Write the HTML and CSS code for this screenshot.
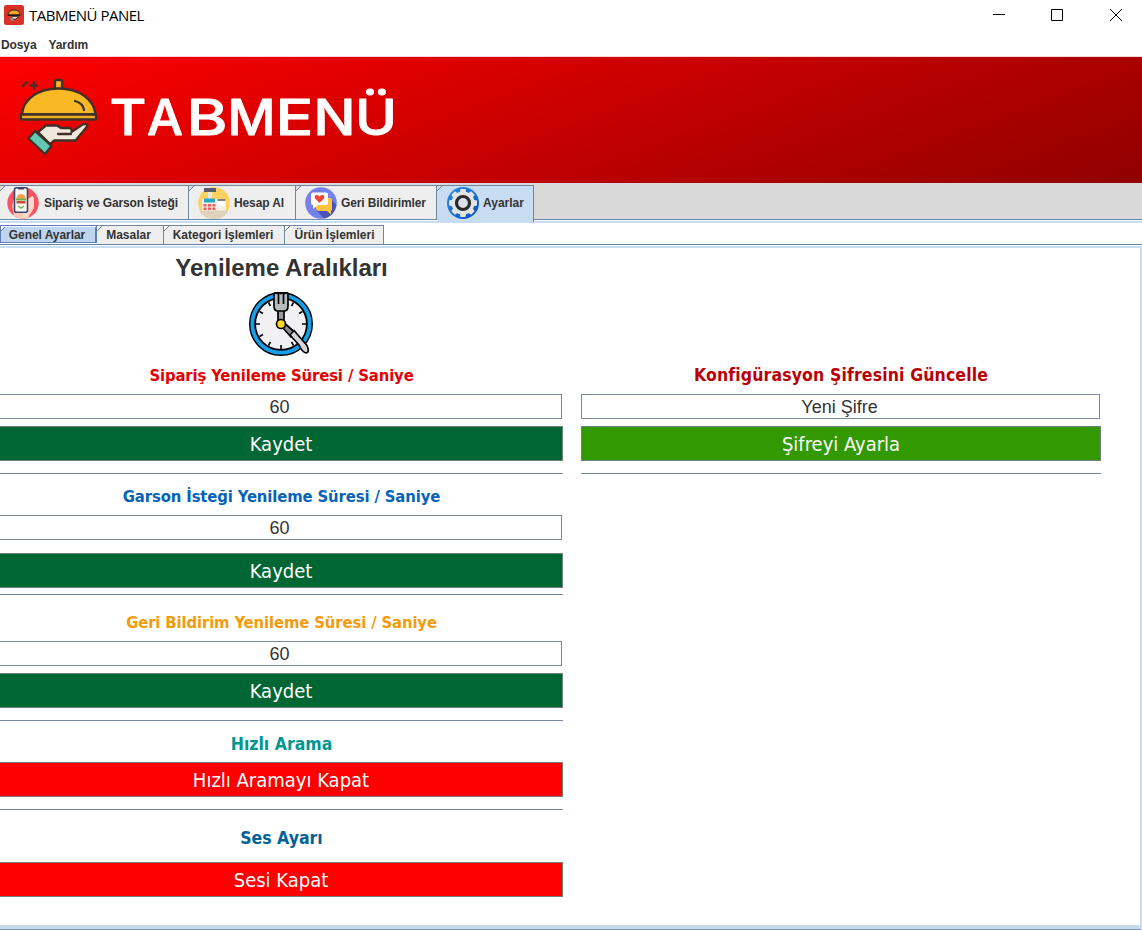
FILE: index.html
```html
<!DOCTYPE html>
<html lang="tr">
<head>
<meta charset="utf-8">
<title>TABMENÜ PANEL</title>
<link rel="stylesheet" href="styles.css">
</head>
<body>
<header class="titlebar">
  <svg class="app-icon" viewBox="0 0 20 20"><rect width="20" height="20" rx="2.500" fill="#d93125"/><path d="M4 9.500C5 6 7 5 10 5s5.500 1 6 4.500v1H4z" fill="#f0a72a" stroke="#2d2118"/><path d="M4 10h12" stroke="#241c18" stroke-width="1.500"/><path d="M7 13l2-1.500h3l3-.5-3 3H9z" fill="#f4e9d8" stroke="#30241e" stroke-width=".8"/><path d="M7 12.500l3 2.500-1 1-3-2z" fill="#67b8a5"/></svg>
  <h1 class="window-title">TABMENÜ PANEL</h1>
  <div class="window-buttons">
    <svg viewBox="0 0 12 12"><path d="M0 5.500h12"/></svg>
    <svg viewBox="0 0 12 12"><path d="M.5.500h11v11H.5z"/></svg>
    <svg viewBox="0 0 12 12"><path d="M0 0l12 12M12 0L0 12"/></svg>
  </div>
</header>
<nav class="menubar"><span class="menu-file">Dosya</span><span class="menu-help">Yardım</span></nav>

<section class="banner">
  <svg class="banner-logo" viewBox="0 0 110 110">
    <g fill="none" stroke="#403028" stroke-width="2.300" stroke-linejoin="round" stroke-linecap="round">
      <path d="M23 21q1-2.500 3.500-3.500M31 20.500h6M34 17.500v6"/>
      <path fill="#f9b924" d="M55 24v-7.500q0-1.500 1.500-1.500h4q1.500 0 1.500 1.500V24z"/>
      <path fill="#f9b924" d="M22 49.500C23 34 38 23.500 58.500 23.500S94 34 95.500 49.500z"/>
      <path fill="#f0ac25" d="M21 49.500h75v5H21z"/>
      <path d="M75 36q8 2 9 9"/>
      <path fill="#f0e8dc" d="M38 67l8-6.500h11l4 2.500h9q2.500 1 1.500 4L82.500 59.500q4-1.500 5 1.500L75.500 75.500H54L50 79z"/>
      <path d="M58 69h13"/>
      <path fill="#62c8b4" d="M35 66l16.500 15-6.500 8L28.500 73.500z"/>
    </g>
  </svg>
  <svg class="wordmark" viewBox="0 0 290 56" aria-label="TABMENÜ">
    <text y="47"><tspan x="-1.500" textLength="37" lengthAdjust="spacingAndGlyphs">T</tspan><tspan x="36" textLength="36" lengthAdjust="spacingAndGlyphs">A</tspan><tspan x="75.500" textLength="41" lengthAdjust="spacingAndGlyphs">B</tspan><tspan x="116.500" textLength="48" lengthAdjust="spacingAndGlyphs">M</tspan><tspan x="164.500" textLength="38" lengthAdjust="spacingAndGlyphs">E</tspan><tspan x="202.500" textLength="42" lengthAdjust="spacingAndGlyphs">N</tspan><tspan x="244" textLength="42" lengthAdjust="spacingAndGlyphs">Ü</tspan></text>
  </svg>
</section>

<nav class="tabs">
  <div class="tab tab-orders">
    <svg class="tab-icon" viewBox="0 0 32 32"><circle cx="16" cy="16" r="15.700" fill="#fb5360"/><path d="M5 19L8 8l3-2v18h9V12l6-3 1 12-6 10q-8 2-14-2z" fill="#ffc9b8"/><path d="M20 15l5-6 2 2v8l-5 5-2 7h-5z" fill="#ffdacb"/><rect x="7.500" y=".8" width="13" height="24.500" rx="2" fill="#fbf8f2" stroke="#39456b" stroke-width="1.600"/><path d="M11 1h6v1.500h-6z" fill="#39456b"/><path d="M9.500 12q0-5 4.500-5t4.500 5z" fill="#f7a451"/><path d="M9 12.500h10" stroke="#73ae49" stroke-width="2"/><path d="M9.500 14h9v2.500h-9z" fill="#c74e38"/><path d="M11 19l3 2 3-2" stroke="#73b65c" stroke-width="1.500" fill="none"/></svg>
    <span>Sipariş ve Garson İsteği</span>
  </div>
  <div class="tab tab-bill">
    <svg class="tab-icon" viewBox="0 0 32 32"><circle cx="16" cy="16" r="15.800" fill="#ffd15d"/><path d="M6 1h12v4H6z" fill="#5c5d6a"/><path d="M10 5h4v7h-4z" fill="#e9e7e5"/><path d="M4 12h24v12H4z" fill="#f4f0e9"/><path d="M1.500 23.500h29q-2 5-6.500 7-8 3-16 0-5-3-6.500-7z" fill="#e1d2bd"/><path d="M6 11.500h11v4H6z" fill="#27a7c4"/><path d="M5.500 17h3v2.500h-3zm4.500 0h3v2.500h-3zm4.500 0h3v2.500h-3zm-9 3.500h3V23h-3zm4.500 0h3V23h-3zm4.500 0h3V23h-3z" fill="#f05b5b"/><path d="M20 13h7v6h-7z" fill="#fff"/><path d="M19.500 13h8" stroke="#55565e" stroke-width="1.500"/></svg>
    <span>Hesap Al</span>
  </div>
  <div class="tab tab-feedback">
    <svg class="tab-icon" viewBox="0 0 32 32"><circle cx="16" cy="16" r="15.800" fill="#7680eb"/><path d="M11 23l8 8.500Q29 29 31.500 18L26 12z" fill="#4855b7"/><path d="M14 11h11q2 0 2 2v9q0 2-1 2v3.500L22 24h-8q-3 0-3-3v-8z" fill="#ffc43d"/><path d="M8 5.500h13q2 0 2 2V16q0 2-2 2h-8l-5 4v-4q-2 0-2-2V7.500q0-2 2-2z" fill="#fff"/><path d="M14.500 16L10 11.500q-1-3 1.500-3.800 2 0 3 2 1-2 3-2 2.500.8 1.500 3.800z" fill="#ef4936"/></svg>
    <span>Geri Bildirimler</span>
  </div>
  <div class="tab tab-settings active">
    <svg class="tab-icon" viewBox="0 0 32 32"><defs><linearGradient id="ring" x2="1" y2="1"><stop stop-color="#2d8eea"/><stop offset="1" stop-color="#0750b1"/></linearGradient></defs><circle cx="16" cy="16" r="16" fill="url(#ring)"/><g fill="#e3e4e8"><circle cx="16" cy="16" r="11.500"/><g id="teeth"><path d="M13.500 2h5l1.200 6h-7.400zM12.300 24h7.400l-1.200 6h-5z"/><path d="M2 13.500v5l6 1.200v-7.400zM24 12.300v7.400l6-1.200v-5z"/></g><use href="#teeth" transform="rotate(45 16 16)"/></g><circle cx="16" cy="16" r="6.500" fill="#dce0e7" stroke="#292a2d" stroke-width="3.200"/></svg>
    <span>Ayarlar</span>
  </div>
</nav>

<nav class="subtabs">
  <div class="subtab sub-general active">Genel Ayarlar</div>
  <div class="subtab sub-tables">Masalar</div>
  <div class="subtab sub-categories">Kategori İşlemleri</div>
  <div class="subtab sub-products">Ürün İşlemleri</div>
</nav>

<main class="content">
  <section class="intervals">
    <h2>Yenileme Aralıkları</h2>
    <svg class="clock" viewBox="0 0 64 64">
      <circle cx="32" cy="32" r="28.500" fill="#f1f1f4" stroke="#000" stroke-width="7"/>
      <circle cx="32" cy="32" r="28.700" fill="none" stroke="#159ee9" stroke-width="3.800"/>
      <g stroke="#000" stroke-width="1.600"><path d="M32 53v4M7 32h4M53 32h4M10.500 19.500l3.500 2M50 21.500l3.500-2M10.500 44.500l3.500-2M19.500 53.500l2-3.500M42.500 50l2 3.500M19.500 10.500l2 3.500M42.500 14l2-3.500"/></g>
      <g stroke="#000" stroke-width="1.700" stroke-linejoin="round">
        <path d="M29 18h6v12h-6z" fill="#96989d"/>
        <path d="M25 1.500q2-1.500 3.500 0 1.700-1.500 3.500 0 1.700-1.500 3.500 0 2-1.500 3.500 0V14q0 5-4 5h-6q-4 0-4-5z" fill="#b8babf"/>
        <path d="M29.500 2v10M34.500 2v10" fill="none"/>
        <path d="M34 36l3-3.500 9 8-4 4.500z" fill="#8c8e93"/>
        <path d="M41 43l4-4.500 13 15q3 7-1 7.500-4-1-7-8z" fill="#d4d5d9"/>
        <circle cx="32" cy="32" r="4.500" fill="#ffda22"/>
      </g>
    </svg>
    <h3 class="label order-label">Sipariş Yenileme Süresi / Saniye</h3>
    <div class="field">60</div>
    <button class="save">Kaydet</button>
    <div class="rule after-order"></div>
    <h3 class="label waiter-label">Garson İsteği Yenileme Süresi / Saniye</h3>
    <div class="field">60</div>
    <button class="save lower">Kaydet</button>
    <div class="rule after-waiter"></div>
    <h3 class="label feedback-label">Geri Bildirim Yenileme Süresi / Saniye</h3>
    <div class="field">60</div>
    <button class="save">Kaydet</button>
    <div class="rule after-feedback"></div>
    <h3 class="label search-label">Hızlı Arama</h3>
    <button class="off">Hızlı Aramayı Kapat</button>
    <div class="rule after-search"></div>
    <h3 class="label sound-label">Ses Ayarı</h3>
    <button class="off sound">Sesi Kapat</button>
  </section>
  <section class="password">
    <h3 class="label password-label">Konfigürasyon Şifresini Güncelle</h3>
    <div class="field">Yeni Şifre</div>
    <button class="apply">Şifreyi Ayarla</button>
    <div class="rule after-order"></div>
  </section>
</main>
</body>
</html>
```
FILE: styles.css
```css
* { box-sizing: border-box; }
body {
  margin: 0;
  height: 930px;
  overflow: hidden;
  background: #fff;
  color: #333;
  font-family: "Liberation Sans", sans-serif;
}
h1, h2, h3 { margin: 0; }

.titlebar { display: flex; height: 30px; padding: 5px 20px 0 4px; }
.app-icon { width: 20px; height: 20px; }
.window-title {
  margin-left: 5px;
  font: 400 15px/20px "Open Sans", sans-serif;
  letter-spacing: -.5px;
  color: #000;
}
.window-buttons { display: flex; gap: 46px; margin: 4px 0 0 auto; }
.window-buttons svg { width: 12px; height: 12px; fill: none; stroke: #000; }
.window-buttons svg:last-child { margin-left: 1px; }

.menubar {
  height: 27px;
  padding: 7px 1px 0;
  border-bottom: 1px solid #f5d5d5;
  font-weight: 700;
  font-size: 12px;
  line-height: 16px;
  letter-spacing: -.1px;
}
.menu-help { margin-left: 12px; }

.banner {
  display: flex;
  height: 126px;
  background: linear-gradient(160deg, #ff0000, #900000);
}
.banner-logo { width: 110px; height: 110px; margin-top: 8px; }
.wordmark { width: 290px; height: 56px; margin: 31px 0 0 1px; overflow: visible; }
.wordmark text {
  font: 500 49px Inter, sans-serif;
  fill: #fff;
  stroke: #fff;
  stroke-width: .8px;
  stroke-linejoin: round;
}

.tabs {
  display: flex;
  height: 37px;
  padding-top: 2px;
  background: #d9d9d9;
  border-bottom: 1px solid #6f88a5;
}
.tab {
  display: flex;
  align-items: center;
  height: 34px;
  padding-left: 9px;
  gap: 4px;
  border: solid #7086a0;
  border-width: 1px 1px 0 0;
  background: linear-gradient(135deg, #d9d9d9 3px, #7086a0 3px 4px, #eee 4px);
  font-weight: 700;
  font-size: 12px;
  letter-spacing: -.12px;
  white-space: nowrap;
}
.tab span { padding-top: 1px; }
.tab-icon { flex: none; width: 32px; height: 32px; }
.tab-orders { width: 189px; padding-left: 7px; gap: 5px; }
.tab-bill { width: 107px; }
.tab-feedback { width: 141px; }
.tab-settings { width: 97px; padding-left: 10px; letter-spacing: 0; }
.tab.active {
  height: 37px;
  padding-bottom: 3px;
  background: linear-gradient(135deg, #d9d9d9 3px, #7086a0 3px 4px, #c8ddf2 4px);
}

.subtabs {
  display: flex;
  height: 28px;
  padding-top: 5px;
  border-bottom: 2px solid #c8ddf0;
  background: linear-gradient(#fff 1px, #c8ddf2 1px 3px, #fff 3px 24px, #6382a8 24px 25px, #fff 25px);
  font-weight: 700;
  font-size: 12px;
  line-height: 18px;
  text-align: center;
}
.subtab {
  height: 19px;
  border: solid #7086a0;
  border-width: 1px 1px 0 0;
  background: linear-gradient(135deg, #fff 3px, #7086a0 3px 4px, #eee 4px);
}
.sub-general { width: 97px; padding-right: 3px; letter-spacing: -.06px; }
.sub-tables { width: 67px; padding-right: 3px; }
.sub-categories { width: 121px; padding-right: 2px; }
.sub-products { width: 99px; padding-left: 1px; }
.subtab.active {
  height: 18px;
  border: 1px solid #617fb7;
  background: linear-gradient(135deg, #fff 3px, #617fb7 3px 4px, #bfd5f0 4px);
  box-shadow: inset 0 1px #eef5ff, inset -1px 0 #617fb7;
}

.content {
  display: flex;
  gap: 18px;
  height: 682px;
  border-right: 2px solid #c8ddec;
  border-bottom: 1px solid #7a8fac;
  box-shadow: inset 0 -4px #c8ddec;
}
.intervals { width: 563px; }
.password { width: 520px; padding-top: 117px; }
.intervals h2 {
  padding-top: 6px;
  font-size: 24px;
  line-height: 28px;
  text-align: center;
}
.clock { display: block; width: 64px; height: 64px; margin: 10px 0 0 249px; }
.label {
  height: 20px;
  font: 700 16.500px/20px "DejaVu Sans Condensed", "DejaVu Sans", sans-serif;
  letter-spacing: -.12px;
  text-align: center;
  white-space: nowrap;
}
.order-label { margin: 10px 0 8px; color: #e60000; }
.waiter-label { margin: 13px 0 8px; color: #0663b8; }
.feedback-label { margin: 18px 0 8px; color: #f49b0b; }
.search-label { margin: 13px 0 8px; color: #009691; font-size: 17.500px; letter-spacing: 0; }
.sound-label { margin: 18px 0 14px; color: #006298; font-size: 17.500px; letter-spacing: 0; }
.password-label { margin-bottom: 9px; color: #bb0004; font-size: 17.500px; letter-spacing: .13px; }
.field {
  height: 25px;
  margin-right: 1px;
  border: 1px solid #7b879a;
  font-size: 18px;
  line-height: 24px;
  text-align: center;
}
.intervals .field { border-left: 0; padding-right: 2px; }
.password .field { padding-right: 2px; }
button {
  display: block;
  width: 100%;
  height: 35px;
  margin: 7px 0 0;
  padding: 0;
  border: 1px solid #71827c;
  color: #fff;
  font: 400 20px/32px "DejaVu Sans Condensed", "DejaVu Sans", sans-serif;
}
.intervals button { border-left: 0; }
.save { background: #006633; }
.lower { margin-top: 13px; }
.off { margin-top: 0; background: #ff0000; }
.apply { background: #339900; }
.rule { height: 1px; background: #7188a2; }
.after-order, .after-feedback, .after-search { margin-top: 12px; }
.after-waiter { margin-top: 6px; }
```
